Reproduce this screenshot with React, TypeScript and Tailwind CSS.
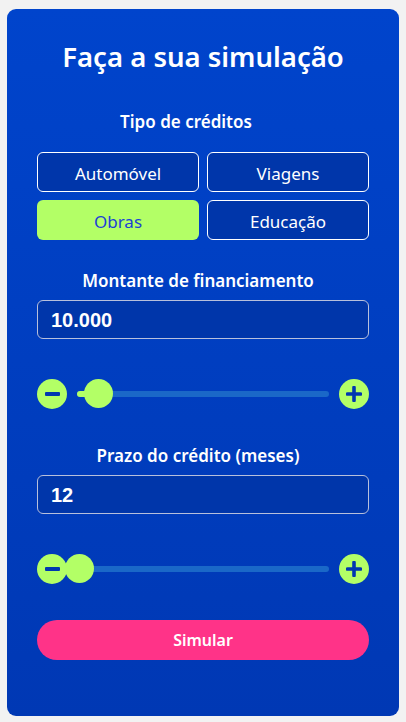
import React from "react";

const font = { fontFamily: '"Noto Sans", "Open Sans", sans-serif' };

function Slider({ thumbX }: { thumbX: number }) {
  return (
    <div className="flex items-center justify-between h-[31px]">
      <button className="w-[30px] h-[30px] rounded-full bg-[#b3ff66] flex items-center justify-center shrink-0 relative z-20">
        <span className="block w-[15px] h-[4px] rounded-[1px] bg-[#0037b0]" />
      </button>
      <div className="relative flex-1 mx-[10px] h-[31px] flex items-center">
        <div className="w-full h-[6px] rounded-full bg-[#1a68c8] overflow-hidden">
          <div className="h-full bg-[#b3ff66]" style={{ width: `${thumbX}px` }} />
        </div>
        <div
          className="absolute top-[1px] w-[29px] h-[29px] rounded-full bg-[#b3ff66] z-10"
          style={{ left: `${thumbX - 14.5}px` }}
        />
      </div>
      <button className="w-[30px] h-[30px] rounded-full bg-[#b3ff66] flex items-center justify-center shrink-0">
        <svg width="16" height="16" viewBox="0 0 16 16">
          <path d="M8 1.5v13M1.5 8h13" stroke="#0037b0" strokeWidth="3.6" strokeLinecap="round" />
        </svg>
      </button>
    </div>
  );
}

export default function App() {
  const types = ["Automóvel", "Viagens", "Obras", "Educação"];
  return (
    <div className="min-h-[722px] bg-[#f2f2f2] pt-[9px] px-[7px] pb-[6px]" style={font}>
      <div className="h-[707px] rounded-[9px] bg-gradient-to-b from-[#0044cc] to-[#0038b4] px-[30px] pt-[30px] text-white">
        <h1 className="text-center text-[27.5px] leading-[36px] font-semibold">Faça a sua simulação</h1>

        <p className="mt-[35px] text-center text-[17px] leading-[24px] font-semibold pr-[34px]">Tipo de créditos</p>

        <div className="mt-[18px] grid grid-cols-2 gap-[8px]">
          {types.map((t) =>
            t === "Obras" ? (
              <button key={t} className="h-[40px] pt-[4px] rounded-[6px] bg-[#b3ff66] text-[#1c3fd6] text-[17px]">
                {t}
              </button>
            ) : (
              <button key={t} className="h-[40px] pt-[4px] rounded-[6px] border border-white bg-[#0036aa] text-white text-[17px]">
                {t}
              </button>
            )
          )}
        </div>

        <p className="mt-[29px] text-center text-[17px] leading-[24px] font-semibold pr-[10px]">Montante de financiamento</p>
        <div
          className="mt-[7px] h-[39px] rounded-[6px] border border-[#b8c0dc] bg-[#0036aa] flex items-center pl-[13px] text-[20px] font-bold"
          style={{ fontFamily: '"Liberation Sans", Arial, sans-serif' }}
        >
          10.000
        </div>
        <div className="mt-[39px]">
          <Slider thumbX={21} />
        </div>

        <p className="mt-[35px] text-center text-[17px] leading-[24px] font-semibold pr-[10px]">Prazo do crédito (meses)</p>
        <div
          className="mt-[7px] h-[39px] rounded-[6px] border border-[#b8c0dc] bg-[#0036aa] flex items-center pl-[13px] text-[20px] font-bold"
          style={{ fontFamily: '"Liberation Sans", Arial, sans-serif' }}
        >
          12
        </div>
        <div className="mt-[39px]">
          <Slider thumbX={2} />
        </div>

        <button className="mt-[36px] w-full h-[40px] rounded-full bg-[#ff3388] text-white text-[16px] font-semibold">
          Simular
        </button>
      </div>
    </div>
  );
}
